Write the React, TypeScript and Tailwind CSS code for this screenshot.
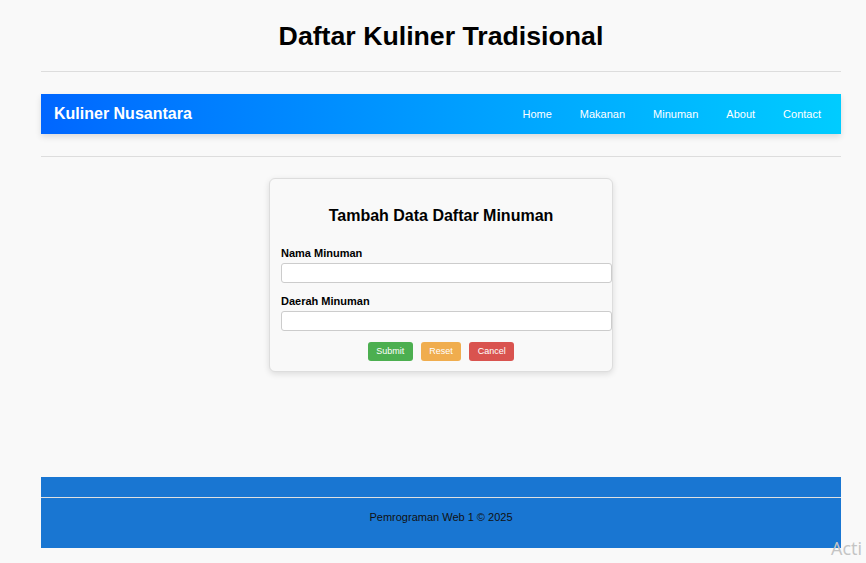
import React from "react";

const links = ["Home", "Makanan", "Minuman", "About", "Contact"];

export default function App() {
  return (
    <div className="relative h-[563px] w-full overflow-hidden bg-[#f9f9f9] font-['Liberation_Sans',Arial,sans-serif] text-black">
      <div className="ml-[41px] w-[800px] pt-[21px]">
        <h1 className="text-center text-[26.7px] font-bold leading-[30px]">
          Daftar Kuliner Tradisional
        </h1>
        <div className="mt-[20px] border-t border-[#dddddd]" />

        <nav className="mt-[22px] flex h-[40px] items-center justify-between bg-gradient-to-r from-[#0066ff] to-[#00ccff] pl-[13px] pr-[20px] shadow-[0_3px_6px_rgba(0,0,0,0.12)]">
          <span className="text-[16px] font-bold leading-[18px] text-white">
            Kuliner Nusantara
          </span>
          <div className="flex gap-[28px] text-[11px] leading-[13px] text-white">
            {links.map((l) => (
              <a key={l} href="#">
                {l}
              </a>
            ))}
          </div>
        </nav>

        <div className="mt-[22px] border-t border-[#dddddd]" />

        <div className="ml-[228px] mt-[21px] w-[344px] rounded-[6px] border border-[#dddddd] bg-[#f9f9f9] px-[11px] pb-[10px] pt-[12px] shadow-[0_2px_6px_rgba(0,0,0,0.12)]">
          <h2 className="mt-[16px] text-center text-[16px] font-bold leading-[18px]">
            Tambah Data Daftar Minuman
          </h2>
          <label className="mt-[22px] block text-[11px] font-bold leading-[13px]">
            Nama Minuman
          </label>
          <input
            type="text"
            className="mt-[3px] block h-[20px] w-[331px] rounded-[3px] border border-[#cccccc] bg-white"
          />
          <label className="mt-[12px] block text-[11px] font-bold leading-[13px]">
            Daerah Minuman
          </label>
          <input
            type="text"
            className="mt-[3px] block h-[20px] w-[331px] rounded-[3px] border border-[#cccccc] bg-white"
          />
          <div className="mt-[11px] flex justify-center gap-[8px] text-[9px] leading-[11px] text-white">
            <button className="h-[19px] rounded-[3px] bg-[#4caf50] px-[8.5px]">Submit</button>
            <button className="h-[19px] rounded-[3px] bg-[#f0ad4e] px-[8.5px]">Reset</button>
            <button className="h-[19px] rounded-[3px] bg-[#d9534f] px-[8.5px]">Cancel</button>
          </div>
        </div>

        <footer className="mt-[105px] h-[71px] bg-[#1976d2]">
          <div className="h-[20px]" />
          <div className="border-t border-[#e0e0e0]" />
          <p className="mt-[13px] text-center text-[11px] leading-[13px] text-[#111111]">
            Pemrograman Web 1 © 2025
          </p>
        </footer>
      </div>

      <span className="absolute left-[831px] top-[536px] whitespace-nowrap font-['Open_Sans',sans-serif] text-[18px] leading-[24px] text-[#c4c4c4]">
        Acti
      </span>
    </div>
  );
}
